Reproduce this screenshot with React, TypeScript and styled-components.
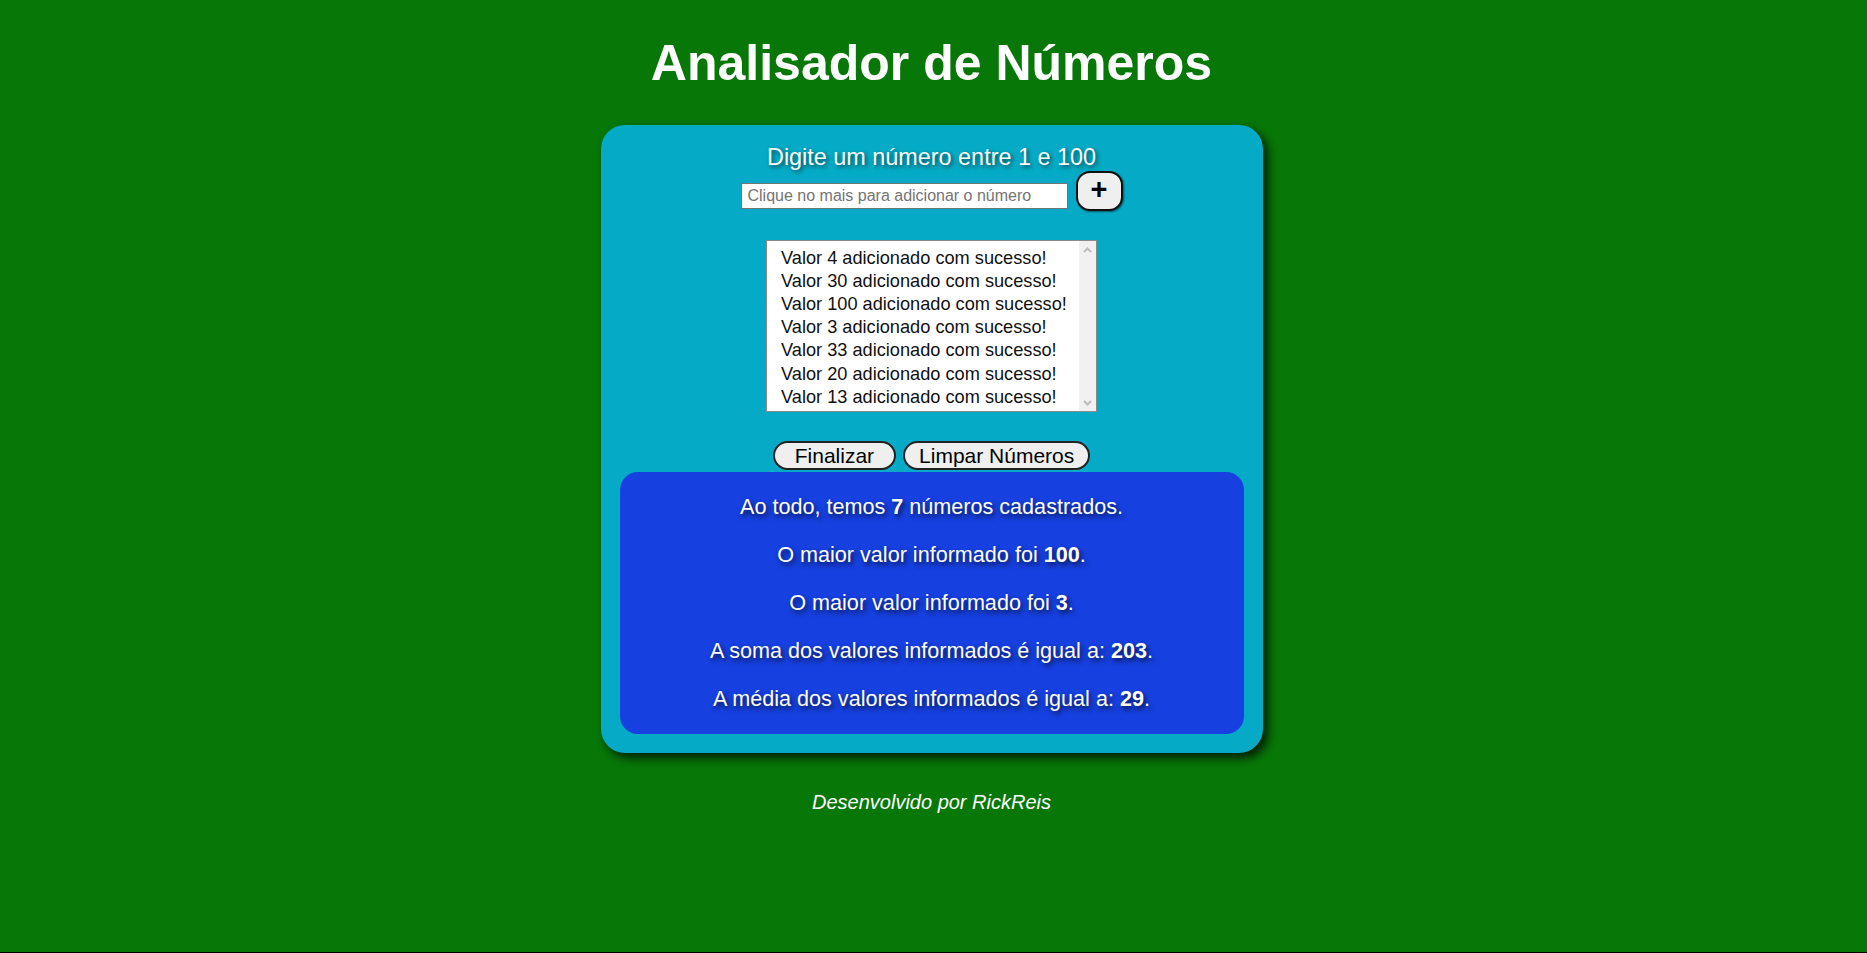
import { createGlobalStyle } from 'styled-components';
import styled from 'styled-components';

const GlobalStyle = createGlobalStyle`
  html {
    background: #000;
  }
  body {
    margin: 0;
    background: #077707;
    font-family: 'Liberation Sans', Arial, sans-serif;
    min-height: 952px;
  }
`;

const Page = styled.main`
  display: flex;
  flex-direction: column;
  align-items: center;
  padding: 35px 4px 0 0;
`;

const Title = styled.h1`
  margin: 0 0 32px;
  font-size: 50px;
  line-height: 57.5px;
  font-weight: bold;
  color: #fff;
`;

const Card = styled.section`
  box-sizing: border-box;
  width: 662px;
  padding: 18px 19px 19px;
  background: #05abc6;
  border-radius: 24px;
  box-shadow: 5px 5px 10px rgba(0, 0, 0, 0.75);
  display: flex;
  flex-direction: column;
  align-items: center;
`;

const Prompt = styled.p`
  margin: 0;
  font-size: 23.4px;
  line-height: 28px;
  color: #fff;
  text-shadow: 2px 2px 4px rgba(0, 0, 0, 0.6);
`;

const InputRow = styled.div`
  display: flex;
  align-items: flex-end;
  gap: 8px;
`;

const NumberInput = styled.input`
  box-sizing: border-box;
  width: 327px;
  height: 26px;
  margin-bottom: 2px;
  padding: 0 6px;
  border: 1px solid #767676;
  font-family: inherit;
  font-size: 16px;
  color: #222;
  background: #fff;

  &::placeholder {
    color: #757575;
  }
`;

const PlusButton = styled.button`
  box-sizing: border-box;
  width: 47px;
  height: 40px;
  padding: 0 0 2px;
  border: 2px solid #111;
  border-radius: 14px;
  background: #efefef;
  box-shadow: 1px 1px 2px rgba(0, 0, 0, 0.5);
  font-family: inherit;
  font-size: 29px;
  font-weight: 600;
  line-height: 1;
  color: #000;
`;

const ListBox = styled.div`
  box-sizing: border-box;
  display: flex;
  width: 331px;
  height: 172px;
  margin-top: 29px;
  border: 1px solid #8a8a8a;
  background: #fff;
  overflow: hidden;
`;

const ListItems = styled.ul`
  flex: 1;
  margin: 0;
  padding: 6px 0 0 14px;
  list-style: none;
`;

const ListItem = styled.li`
  font-size: 18.2px;
  line-height: 23.2px;
  color: #111;
  white-space: nowrap;
`;

const ScrollTrack = styled.div`
  width: 17px;
  background: #f1f1f1;
  display: flex;
  flex-direction: column;
  justify-content: space-between;
  align-items: center;
  padding: 6px 0 5px;
`;

const Arrow = styled.svg`
  width: 9px;
  height: 6px;
`;

const ButtonRow = styled.div`
  display: flex;
  gap: 7px;
  margin-top: 29px;
`;

const PillButton = styled.button<{ $padX: number }>`
  box-sizing: border-box;
  height: 29px;
  padding: 0 ${(p) => p.$padX}px;
  border: 2px solid #222;
  border-radius: 15px;
  background: #efefef;
  font-family: inherit;
  font-size: 21px;
  line-height: 1;
  color: #000;
`;

const Results = styled.div`
  box-sizing: border-box;
  width: 100%;
  margin-top: 2px;
  padding: 0.1px 0;
  background: #1640e0;
  border-radius: 18px;
`;

const ResultLine = styled.p`
  margin: 22px 0;
  font-size: 21.6px;
  line-height: 26px;
  text-align: center;
  color: #fff;
  text-shadow: 2px 3px 5px rgba(0, 0, 0, 0.7);
`;

const Footer = styled.footer`
  margin-top: 38px;
  font-size: 20px;
  line-height: 23px;
  font-style: italic;
  color: #fff;
`;

const values = [4, 30, 100, 3, 33, 20, 13];

export default function App() {
  const total = values.reduce((a, b) => a + b, 0);
  return (
    <>
      <GlobalStyle />
      <Page>
        <Title>Analisador de Números</Title>
        <Card>
          <Prompt>Digite um número entre 1 e 100</Prompt>
          <InputRow>
            <NumberInput type="number" placeholder="Clique no mais para adicionar o número" />
            <PlusButton>+</PlusButton>
          </InputRow>
          <ListBox>
            <ListItems>
              {values.map((v) => (
                <ListItem key={v}>Valor {v} adicionado com sucesso!</ListItem>
              ))}
            </ListItems>
            <ScrollTrack>
              <Arrow viewBox="0 0 9 6">
                <path d="M1 5 L4.5 1.5 L8 5" fill="none" stroke="#bdbdbd" strokeWidth="2" />
              </Arrow>
              <Arrow viewBox="0 0 9 6">
                <path d="M1 1 L4.5 4.5 L8 1" fill="none" stroke="#bdbdbd" strokeWidth="2" />
              </Arrow>
            </ScrollTrack>
          </ListBox>
          <ButtonRow>
            <PillButton $padX={20}>Finalizar</PillButton>
            <PillButton $padX={14}>Limpar Números</PillButton>
          </ButtonRow>
          <Results>
            <ResultLine>
              Ao todo, temos <strong>{values.length}</strong> números cadastrados.
            </ResultLine>
            <ResultLine>
              O maior valor informado foi <strong>{Math.max(...values)}</strong>.
            </ResultLine>
            <ResultLine>
              O maior valor informado foi <strong>{Math.min(...values)}</strong>.
            </ResultLine>
            <ResultLine>
              A soma dos valores informados é igual a: <strong>{total}</strong>.
            </ResultLine>
            <ResultLine>
              A média dos valores informados é igual a: <strong>{Math.floor(total / values.length)}</strong>.
            </ResultLine>
          </Results>
        </Card>
        <Footer>Desenvolvido por RickReis</Footer>
      </Page>
    </>
  );
}
